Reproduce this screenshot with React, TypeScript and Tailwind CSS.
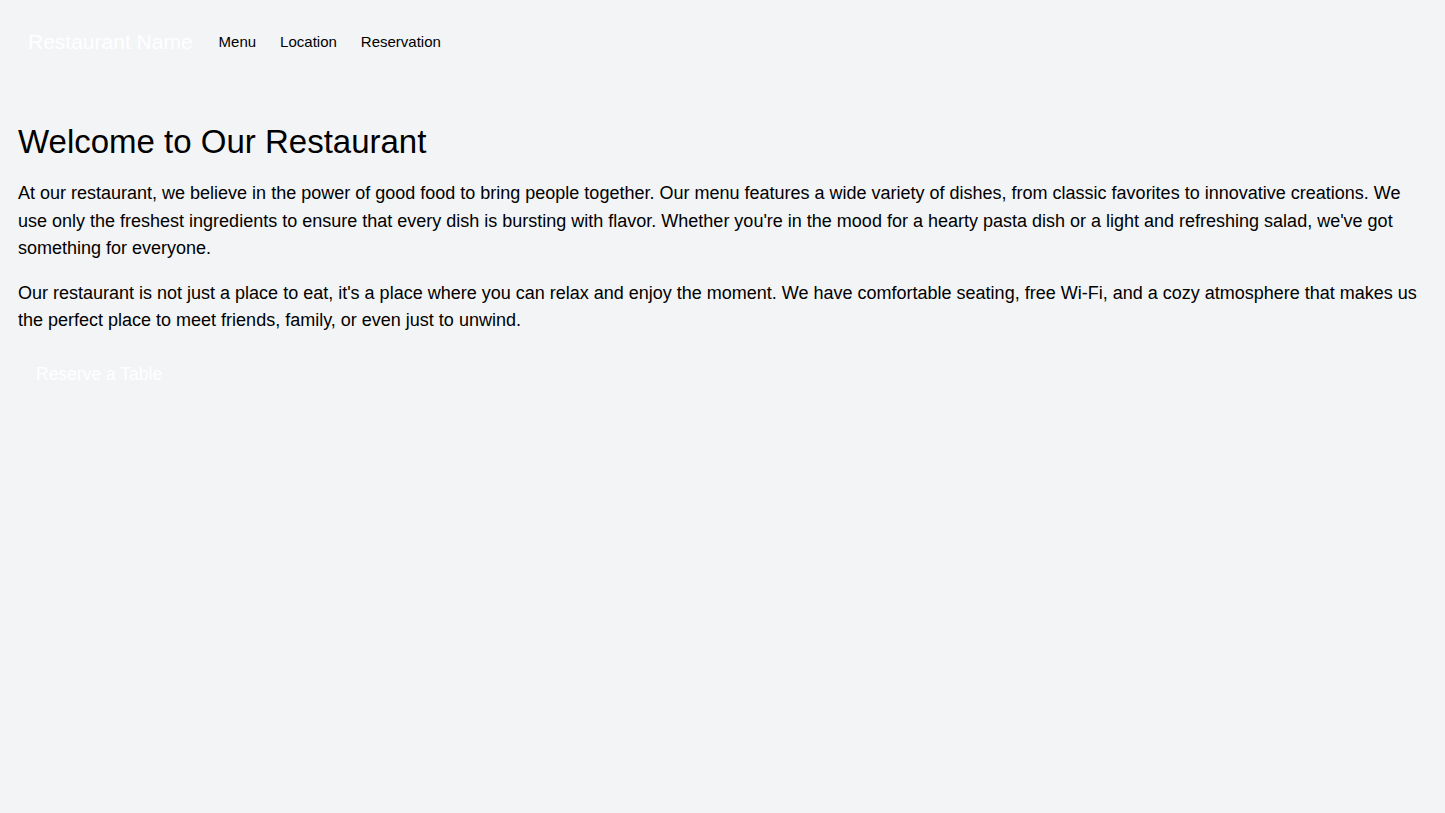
export default function App() {
  return (
    <div className="min-h-screen bg-gray-100 text-black font-['Liberation_Sans',Arial,sans-serif]">
      <nav className="flex items-center px-7 py-7">
        <span className="text-[21px] leading-7 text-white mr-[26px]">Restaurant Name</span>
        <div className="flex items-center gap-6">
          <a className="text-[15px] leading-5 text-black">Menu</a>
          <a className="text-[15px] leading-5 text-black">Location</a>
          <a className="text-[15px] leading-5 text-black">Reservation</a>
        </div>
      </nav>
      <main className="px-[18px] pt-10 pb-4">
        <h1 className="text-[33px] leading-9 mb-5">Welcome to Our Restaurant</h1>
        <p className="text-lg leading-[27.6px] mb-[17px]">At our restaurant, we believe in the power of good food to bring people together. Our menu features a wide variety of dishes, from classic favorites to innovative creations. We use only the freshest ingredients to ensure that every dish is bursting with flavor. Whether you're in the mood for a hearty pasta dish or a light and refreshing salad, we've got something for everyone.</p>
        <p className="text-lg leading-[27.6px] mb-[17px]">Our restaurant is not just a place to eat, it's a place where you can relax and enjoy the moment. We have comfortable seating, free Wi-Fi, and a cozy atmosphere that makes us the perfect place to meet friends, family, or even just to unwind.</p>
        <button className="text-[17.5px] leading-7 text-white px-[18px] py-2">Reserve a Table</button>
      </main>
    </div>
  );
}
